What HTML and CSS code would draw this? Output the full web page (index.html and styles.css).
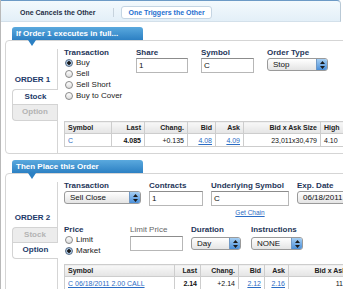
FILE: index.html
```html
<!DOCTYPE html>
<html lang="en">
<head>
    <meta charset="UTF-8">
    <meta name="viewport" content="width=device-width, initial-scale=1.0">
    <title>Conditional Orders</title>
    <link rel="stylesheet" href="styles.css">
</head>
<body>

    <div class="frame">
        <div class="tabbar">
            <span class="tab">One Cancels the Other</span>
            <span class="tab-sep"></span>
            <span class="tab tab-on">One Triggers the Other</span>
        </div>

        <!-- Order 1 -->
        <section class="order">
            <div class="ribbon">If Order 1 executes in full...</div>
            <div class="panel">
                <div class="side">
                    <div class="side-title">ORDER 1</div>
                    <div class="vtab vtab-first vtab-on">Stock</div>
                    <div class="vtab vtab-last">Option</div>
                </div>
                <div class="main">
                    <div class="row">
                        <div class="field f-trans">
                            <span class="lbl">Transaction</span>
                            <div class="opt"><span class="radio checked"></span>Buy</div>
                            <div class="opt"><span class="radio"></span>Sell</div>
                            <div class="opt"><span class="radio"></span>Sell Short</div>
                            <div class="opt"><span class="radio"></span>Buy to Cover</div>
                        </div>
                        <div class="field f-share">
                            <span class="lbl">Share</span>
                            <div class="input w-52">1</div>
                        </div>
                        <div class="field f-symbol">
                            <span class="lbl">Symbol</span>
                            <div class="input w-53">C</div>
                        </div>
                        <div class="field">
                            <span class="lbl">Order Type</span>
                            <div class="select w-61">
                                <span class="sel-text">Stop</span>
                                <span class="sel-arrows"><svg width="5" height="8" viewBox="0 0 5 8"><path d="M2.5 0L5 3H0zM2.5 8L0 5h5z" fill="#1a1a1a"/></svg></span>
                            </div>
                        </div>
                    </div>

                    <table class="quote q1">
                        <tr>
                            <th class="left c1">Symbol</th>
                            <th class="c2">Last</th>
                            <th class="c3">Chang.</th>
                            <th class="c4">Bid</th>
                            <th class="c5">Ask</th>
                            <th class="c6">Bid x Ask Size</th>
                            <th class="c7 left">High</th>
                        </tr>
                        <tr>
                            <td class="left"><a class="link">C</a></td>
                            <td class="strong">4.085</td>
                            <td class="up">+0.135</td>
                            <td><a class="link u">4.08</a></td>
                            <td><a class="link u">4.09</a></td>
                            <td>23,011x30,479</td>
                            <td class="left">4.10</td>
                        </tr>
                    </table>
                </div>
            </div>
        </section>

        <!-- Order 2 -->
        <section class="order order-next">
            <div class="ribbon">Then Place this Order</div>
            <div class="panel">
                <div class="side">
                    <div class="side-title">ORDER 2</div>
                    <div class="vtab vtab-first">Stock</div>
                    <div class="vtab vtab-last vtab-on">Option</div>
                </div>
                <div class="main">
                    <div class="row">
                        <div class="field gap-8">
                            <span class="lbl">Transaction</span>
                            <div class="select w-77">
                                <span class="sel-text">Sell Close</span>
                                <span class="sel-arrows"><svg width="5" height="8" viewBox="0 0 5 8"><path d="M2.5 0L5 3H0zM2.5 8L0 5h5z" fill="#1a1a1a"/></svg></span>
                            </div>
                        </div>
                        <div class="field gap-8">
                            <span class="lbl">Contracts</span>
                            <div class="input w-54">1</div>
                        </div>
                        <div class="field gap-8">
                            <span class="lbl">Underlying Symbol</span>
                            <div class="input w-78">C</div>
                            <a class="chain">Get Chain</a>
                        </div>
                        <div class="field">
                            <span class="lbl">Exp. Date</span>
                            <div class="select w-62">
                                <span class="sel-text">06/18/2011</span>
                                <span class="sel-arrows"><svg width="5" height="8" viewBox="0 0 5 8"><path d="M2.5 0L5 3H0zM2.5 8L0 5h5z" fill="#1a1a1a"/></svg></span>
                            </div>
                        </div>
                    </div>

                    <div class="row row-second">
                        <div class="field f-price">
                            <span class="lbl">Price</span>
                            <div class="opt"><span class="radio"></span>Limit</div>
                            <div class="opt"><span class="radio checked"></span>Market</div>
                        </div>
                        <div class="field gap-8">
                            <span class="lbl lbl-plain">Limit Price</span>
                            <div class="input input-low w-53"></div>
                        </div>
                        <div class="field f-duration">
                            <span class="lbl">Duration</span>
                            <div class="select select-low w-50">
                                <span class="sel-text">Day</span>
                                <span class="sel-arrows"><svg width="5" height="8" viewBox="0 0 5 8"><path d="M2.5 0L5 3H0zM2.5 8L0 5h5z" fill="#1a1a1a"/></svg></span>
                            </div>
                        </div>
                        <div class="field">
                            <span class="lbl">Instructions</span>
                            <div class="select select-low w-52">
                                <span class="sel-text">NONE</span>
                                <span class="sel-arrows"><svg width="5" height="8" viewBox="0 0 5 8"><path d="M2.5 0L5 3H0zM2.5 8L0 5h5z" fill="#1a1a1a"/></svg></span>
                            </div>
                        </div>
                    </div>

                    <table class="quote q2">
                        <tr>
                            <th class="left d1">Symbol</th>
                            <th class="d2">Last</th>
                            <th class="d3">Chang.</th>
                            <th class="d4">Bid</th>
                            <th class="d5">Ask</th>
                            <th class="d6">Bid x Ask Size</th>
                        </tr>
                        <tr>
                            <td class="left"><a class="link u">C 06/18/2011 2.00 CALL</a></td>
                            <td class="strong">2.14</td>
                            <td class="up">+2.14</td>
                            <td><a class="link u">2.12</a></td>
                            <td><a class="link u">2.16</a></td>
                            <td>1171x40</td>
                        </tr>
                    </table>
                </div>
            </div>
        </section>
    </div>

</body>
</html>
```

FILE: styles.css
```css
* {
    box-sizing: border-box;
}

html,
body {
    margin: 0;
    overflow: hidden;
}

body {
    width: 343px;
    height: 289px;
    font-family: 'Liberation Sans', Arial, sans-serif;
    font-size: 8px;
    color: #1f3659;
    background-color: #fff;
}

.frame {
    width: 440px;
    min-height: 289px;
    border-left: 1px solid #b9b9b9;
}

/* top tab strip */
.tabbar {
    display: flex;
    align-items: center;
    width: 340px;
    height: 22px;
    padding: 3px 0 0 19px;
    border-top: 1px solid #6c9ac6;
    border-bottom: 1px solid #d3e0ea;
    border-right: 1px solid #b9c9d6;
    border-top-right-radius: 4px;
    background: linear-gradient(#f3f9fd, #e3eff8);
}

.tab {
    font-size: 7px;
    font-weight: bold;
    color: #1f2f45;
}

.tab-sep {
    width: 1px;
    height: 9px;
    margin: 0 7px 0 18px;
    background-color: #c7d3dd;
}

.tab-on {
    padding: 0 6px;
    line-height: 11px;
    color: #1f6fd0;
    background-color: #fff;
    border: 1px solid #c5d5e3;
    border-radius: 3px;
}

/* order blocks */
.order {
    padding-top: 5px;
}

.order-next {
    padding-top: 6px;
}

.ribbon {
    position: relative;
    width: 131px;
    height: 13px;
    margin-left: 11px;
    padding-left: 4px;
    line-height: 13px;
    font-weight: bold;
    color: #fff;
    background: linear-gradient(#5aa9de, #2c80c3);
    border-radius: 3px 3px 0 0;
}

.ribbon::after {
    content: "";
    position: absolute;
    left: 16px;
    top: 13px;
    border-style: solid;
    border-width: 6px 4px 0;
    border-color: #2c80c3 transparent transparent;
}

.panel {
    display: flex;
    margin-left: 4px;
    border: 1px solid #d5d5d5;
    border-radius: 4px;
}

.side {
    flex: none;
    width: 52px;
    margin-top: 8px;
    padding: 25px 0 0 6px;
    border-right: 1px solid #d5d5d5;
}

.order-next .side {
    padding-top: 30px;
}

.side-title {
    padding-right: 4px;
    margin-bottom: 4px;
    line-height: 11px;
    text-align: center;
    font-weight: bold;
    color: #1d3a6a;
}

.vtab {
    height: 16px;
    line-height: 14px;
    text-align: center;
    font-weight: bold;
    color: #b3b3b3;
    background-color: #ececec;
    border: 1px solid #d3d3d3;
    border-right: none;
}

.vtab-first {
    border-top-left-radius: 4px;
}

.vtab-last {
    border-top: none;
    border-bottom-left-radius: 4px;
}

.vtab-on {
    margin-right: -1px;
    color: #1d3a6a;
    background-color: #fff;
}

.main {
    flex: 1;
    padding: 7px 0 6px 6px;
}

/* form fields */
.row {
    display: flex;
}

.row-second {
    margin-top: 8px;
}

.field {
    flex: none;
}

.f-trans {
    width: 72px;
}

.f-share {
    width: 65px;
}

.f-symbol {
    width: 66px;
}

.f-price {
    width: 66px;
}

.f-duration {
    width: 60px;
}

.gap-8 {
    margin-right: 8px;
}

.lbl {
    display: block;
    height: 9px;
    line-height: 9px;
    font-weight: bold;
    white-space: nowrap;
}

.lbl-plain {
    font-weight: normal;
    color: #666;
}

.opt {
    display: flex;
    align-items: center;
    height: 11px;
    color: #222;
}

.radio {
    width: 8px;
    height: 8px;
    margin: 0 3px 0 1px;
    border: 1px solid #8a8a8a;
    border-radius: 50%;
    background: linear-gradient(#fff, #dcdcdc);
}

.radio.checked {
    border-color: #5a6f88;
    background: radial-gradient(circle, #1a1a1a 0 1.5px, #a9c2dd 2px);
}

.input {
    height: 15px;
    margin-top: 1px;
    padding: 0 2px;
    line-height: 13px;
    color: #111;
    background-color: #fff;
    border: 1px solid #b7b7b7;
    border-top-color: #8c8c8c;
}

.input-low {
    margin-top: 2px;
}

.select {
    display: flex;
    height: 13px;
    margin-top: 1px;
    color: #111;
    background: linear-gradient(#fff, #e4e4e4);
    border: 1px solid #9a9a9a;
    border-radius: 3px;
    overflow: hidden;
}

.select-low {
    margin-top: 3px;
}

.sel-text {
    flex: 1;
    padding-left: 5px;
    line-height: 11px;
    white-space: nowrap;
    overflow: hidden;
}

.sel-arrows {
    display: flex;
    align-items: center;
    justify-content: center;
    width: 11px;
    background: linear-gradient(#a6cff3, #4a8fd9);
    border-left: 1px solid #7099c6;
}

.w-50 { width: 50px; }
.w-52 { width: 52px; }
.w-53 { width: 53px; }
.w-54 { width: 54px; }
.w-61 { width: 61px; }
.w-62 { width: 62px; }
.w-77 { width: 77px; }
.w-78 { width: 78px; }

.chain {
    display: block;
    margin-top: 2px;
    line-height: 9px;
    font-size: 6.5px;
    text-align: center;
    color: #2b6cc4;
    text-decoration: underline;
}

/* quote tables */
.quote {
    border-collapse: collapse;
    table-layout: fixed;
    font-size: 7px;
}

.q1 {
    width: 296px;
    margin-top: 20px;
}

.q2 {
    width: 301px;
    margin-top: 8px;
}

.quote th,
.quote td {
    padding: 0 3px;
    text-align: right;
    white-space: nowrap;
    overflow: hidden;
    border: 1px solid #cdcdcd;
}

.quote th {
    height: 12px;
    font-weight: bold;
    color: #222;
    background: linear-gradient(#f8f8f8, #e4e4e4);
}

.quote td {
    height: 13px;
    color: #111;
}

.quote .left {
    text-align: left;
}

.c1 { width: 47px; }
.c2 { width: 33px; }
.c3 { width: 43px; }
.c4 { width: 28px; }
.c5 { width: 28px; }
.c6 { width: 77px; }
.c7 { width: 40px; }

.d1 { width: 110px; }
.d2 { width: 26px; }
.d3 { width: 38px; }
.d4 { width: 26px; }
.d5 { width: 24px; }
.d6 { width: 77px; }

.link {
    color: #2b6cc4;
}

.u {
    text-decoration: underline;
}

.strong {
    font-weight: bold;
}

.up {
    color: #2e8b2e;
}
```
